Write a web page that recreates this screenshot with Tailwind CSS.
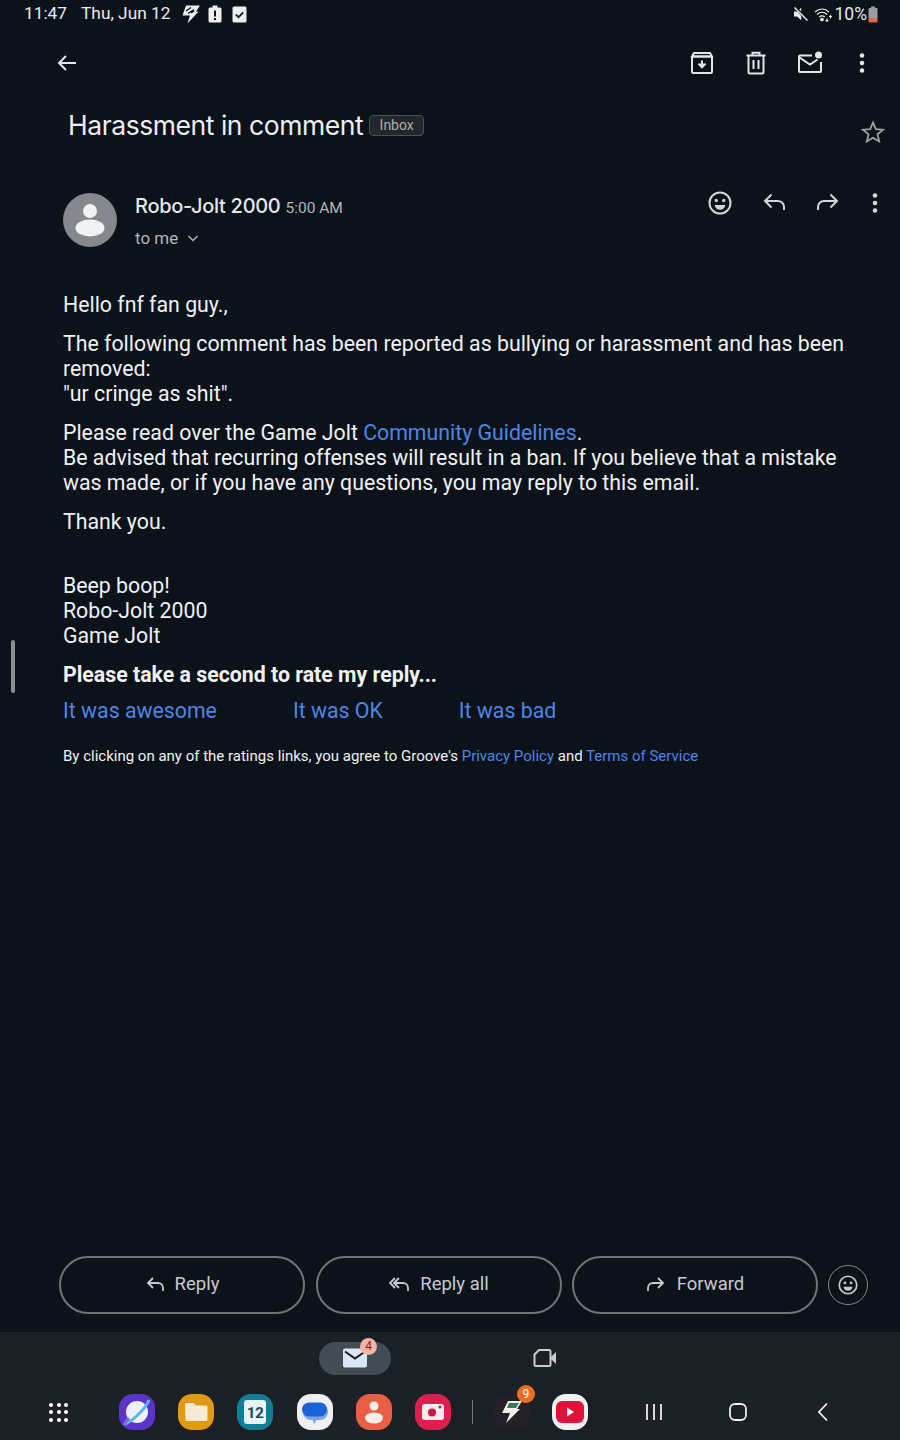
<!DOCTYPE html>
<html lang="en">
<head>
    <meta charset="UTF-8">
    <meta name="viewport" content="width=device-width, initial-scale=1.0">
    <title>Harassment in comment</title>
    <script src="https://cdn.jsdelivr.net/npm/@tailwindcss/browser@4"></script>
</head>
<body class="bg-[#0b121a] font-['Roboto',sans-serif] text-[#eceef0]">
<div class="relative w-[900px] h-[1440px] flex flex-col overflow-hidden">

    <!-- Scroll indicator -->
    <div class="absolute left-[11px] top-[640px] w-[4px] h-[53px] rounded-full bg-[#8b8f94]"></div>

    <!-- Status bar -->
    <div class="h-[28px] flex items-center justify-between pl-[24px] pr-[22px] text-[#e8eaec]">
        <div class="flex items-center">
            <span class="text-[17.300px]">11:47</span>
            <span class="text-[17.300px] ml-[14px]">Thu, Jun 12</span>
            <svg class="ml-[11px]" width="20" height="20" viewBox="0 0 20 20" fill="#eceef0"><path d="M5 1.500h14l-4 6h2.500L6.500 19.500l2.500-8H1.500z"/><path d="M5 7l5-3.500M7 9.500l6-4M10 9l3-2" stroke="#0b121a" stroke-width="1.300" fill="none"/></svg>
            <svg class="ml-[7px]" width="14" height="18" viewBox="0 0 14 18"><path fill="#eceef0" d="M4.500 0.500h5v2h2.500a1.500 1.500 0 0 1 1.500 1.500v12a1.500 1.500 0 0 1-1.500 1.500h-10a1.500 1.500 0 0 1-1.500-1.500v-12a1.500 1.500 0 0 1 1.500-1.500h2.500z"/><path fill="#0b121a" d="M6 5.500h2v6h-2zM6 13h2v2h-2z"/></svg>
            <svg class="ml-[10px]" width="15" height="17" viewBox="0 0 15 17"><rect x="0.500" y="0.500" width="14" height="16" rx="1.500" fill="#eceef0"/><path d="M3.800 8.500l2.700 2.700 4.800-4.800" stroke="#0b121a" stroke-width="1.700" fill="none"/></svg>
        </div>
        <div class="flex items-center">
            <svg width="16" height="16" viewBox="0 0 16 16" fill="#eceef0"><path d="M1 5.500h3.200l4-3.800v12.600l-4-3.800H1z"/><path d="M2 1l12.500 13.500" stroke="#0b121a" stroke-width="3"/><path d="M1.500 1.500l13 13" stroke="#eceef0" stroke-width="1.400"/></svg>
            <svg class="ml-[5px]" width="19" height="15" viewBox="0 0 19 15" fill="none" stroke="#eceef0" stroke-width="1.100"><path d="M1 5c4-4 10-4 14 0M3 7.500c3-2.800 7-2.800 10 0M5.200 10c1.800-1.500 3.800-1.500 5.600 0"/><circle cx="8" cy="12.500" r="1.300" fill="#eceef0"/><path d="M13 11.500v3M11.800 13l1.200 1.500 1.200-1.500M16.500 8v3.500M15 9.500h3"/></svg>
            <span class="text-[17.500px] ml-[2px]">10%</span>
            <svg class="ml-[1px]" width="10" height="17" viewBox="0 0 10 17"><path fill="#9a9da0" d="M3 0.500h4v1.500h1.500a1 1 0 0 1 1 1v9h-9v-9a1 1 0 0 1 1-1h1.500z"/><path fill="#e0654a" d="M0.500 12h9v3.500a1 1 0 0 1-1 1h-7a1 1 0 0 1-1-1z"/></svg>
        </div>
    </div>

    <!-- Toolbar -->
    <div class="h-[70px] flex items-center pl-[55px] pr-[26px]">
        <svg width="24" height="24" viewBox="0 0 24 24" fill="none" stroke="#e3e5e8" stroke-width="2"><path d="M21 12H4M11 5l-7 7 7 7"/></svg>
        <div class="ml-auto flex items-center gap-[30px]">
            <svg width="24" height="24" viewBox="0 0 24 24" fill="none" stroke="#e3e5e8" stroke-width="2"><rect x="2" y="5.500" width="20" height="16.500" rx="1.500"/><path d="M4 2h16l2 3.500H2z"/><path d="M12 9.500v7"/><path d="M8 13l4 4.300 4-4.300z" fill="#e3e5e8" stroke-width="1"/></svg>
            <svg width="24" height="24" viewBox="0 0 24 24" fill="none" stroke="#e3e5e8" stroke-width="2"><path d="M4.500 5.500V21a1.500 1.500 0 0 0 1.500 1.500h12a1.500 1.500 0 0 0 1.500-1.500V5.500M2.500 4.500h19M8.500 4V1.800h7V4M9.500 9v9M14.500 9v9"/></svg>
            <svg class="-ml-[1px]" width="26" height="24" viewBox="0 0 26 24" fill="none" stroke="#e3e5e8" stroke-width="2"><path d="M15 4.500H3a1 1 0 0 0-1 1V20a1 1 0 0 0 1 1h20a1 1 0 0 0 1-1v-9"/><path d="M2.500 6.500l10.500 7 7.500-5"/><circle cx="21.500" cy="4" r="3.500" fill="#e3e5e8" stroke="none"/></svg>
            <svg class="-ml-[3px]" width="24" height="24" viewBox="0 0 24 24" fill="#e3e5e8"><circle cx="12" cy="4.500" r="2.300"/><circle cx="12" cy="12" r="2.300"/><circle cx="12" cy="19.500" r="2.300"/></svg>
        </div>
    </div>

    <!-- Subject -->
    <div class="flex items-center pl-[68px] pr-[15px] h-[56px]">
        <h1 class="font-['Inter',sans-serif] text-[26.500px] tracking-[-0.45px] text-[#eceef0]">Harassment in comment</h1>
        <span class="ml-[6px] -mt-[2px] h-[21px] w-[55px] flex items-center justify-center rounded-[4px] border border-[#4a4f55] bg-[#22272d] text-[14px] text-[#a9adb1]">Inbox</span>
        <svg class="ml-auto mt-[12px]" width="24" height="24" viewBox="0 0 24 24" fill="none" stroke="#9ea2a6" stroke-width="1.800"><path d="M12 2.500l2.800 6.600 7.200.6-5.500 4.700 1.700 7-6.200-3.700-6.200 3.700 1.700-7L2 9.700l7.200-.6z"/></svg>
    </div>

    <!-- Sender -->
    <div class="flex pl-[63px] pr-[13px] mt-[12px]">
        <svg class="mt-[27px] shrink-0" width="54" height="54" viewBox="0 0 54 54"><circle cx="27" cy="27" r="27" fill="#85888c"/><circle cx="27" cy="18" r="7" fill="#f1f2f3"/><ellipse cx="27" cy="35" rx="14.500" ry="8.500" fill="#f1f2f3"/></svg>
        <div class="ml-[18px] mt-[25px]">
            <div class="flex items-baseline">
                <span class="font-['Inter',sans-serif] font-medium text-[20px] tracking-[-0.3px] text-[#e6e8ea]">Robo-Jolt 2000</span>
                <span class="ml-[5px] text-[15.500px] text-[#b4b7bb]">5:00 AM</span>
            </div>
            <div class="flex items-center mt-[5px] text-[17px] text-[#b4b7bb]">
                to me
                <svg class="ml-[8px] -mt-[2px]" width="14" height="14" viewBox="0 0 14 14" fill="none" stroke="#b4b7bb" stroke-width="1.400"><path d="M2.500 5l4.500 4.500L11.500 5"/></svg>
            </div>
        </div>
        <div class="ml-auto flex items-center gap-[30px] h-[28px] mt-[23px]">
            <svg width="24" height="24" viewBox="0 0 24 24" fill="none" stroke="#d3d6d9" stroke-width="2"><circle cx="12" cy="12" r="10.500"/><circle cx="8.300" cy="9.500" r="1.700" fill="#d3d6d9" stroke="none"/><circle cx="15.700" cy="9.500" r="1.700" fill="#d3d6d9" stroke="none"/><path d="M6.500 14h11c-.6 3-2.800 4.800-5.500 4.800S7.100 17 6.500 14z" fill="#d3d6d9" stroke="none"/></svg>
            <svg width="24" height="24" viewBox="0 0 24 24" fill="none" stroke="#d3d6d9" stroke-width="2"><path d="M22 19v-3a6 6 0 0 0-6-6H3M9.500 3.500L3 10l6.500 6.500"/></svg>
            <svg width="24" height="24" viewBox="0 0 24 24" fill="none" stroke="#d3d6d9" stroke-width="2"><path d="M2 19v-3a6 6 0 0 1 6-6h13M14.500 3.500L21 10l-6.500 6.500"/></svg>
            <svg class="-ml-[7px]" width="24" height="24" viewBox="0 0 24 24" fill="#d3d6d9"><circle cx="12" cy="4.500" r="2.300"/><circle cx="12" cy="12" r="2.300"/><circle cx="12" cy="19.500" r="2.300"/></svg>
        </div>
    </div>

    <!-- Message body -->
    <div class="pl-[63px] pr-[40px] mt-[40px] text-[21.300px] leading-[25px] text-[#f0f1f3]">
        <p>Hello fnf fan guy.,</p>
        <p class="mt-[14px]">The following comment has been reported as bullying or harassment and has been removed:<br>"ur cringe as shit".</p>
        <p class="mt-[14px]">Please read over the Game Jolt <a class="text-[#4d86e6]">Community Guidelines</a>.<br>Be advised that recurring offenses will result in a ban. If you believe that a mistake was made, or if you have any questions, you may reply to this email.</p>
        <p class="mt-[14px]">Thank you.</p>
        <p class="mt-[39px]">Beep boop!<br>Robo-Jolt 2000<br>Game Jolt</p>
        <p class="mt-[14px] font-bold">Please take a second to rate my reply...</p>
        <div class="flex mt-[11px] text-[#4d86e6]">
            <a>It was awesome</a>
            <a class="ml-[76px]">It was OK</a>
            <a class="ml-[76px]">It was bad</a>
        </div>
        <p class="mt-[23px] text-[15px] leading-[20px]">By clicking on any of the ratings links, you agree to Groove's <a class="text-[#4d86e6]">Privacy Policy</a> and <a class="text-[#4d86e6]">Terms of Service</a></p>
    </div>

    <!-- Reply actions -->
    <div class="mt-auto flex items-center gap-[10px] pl-[59px] h-[58px] mb-[18px] text-[18.500px] text-[#c6c9cd]">
        <button class="w-[246px] h-[58px] rounded-full border-2 border-[#6f7377] flex items-center justify-center gap-[10px]">
            <svg width="20" height="20" viewBox="0 0 20 20" fill="none" stroke="#c6c9cd" stroke-width="1.800"><path d="M18 16v-3a5 5 0 0 0-5-5H3M8 3L3 8l5 5"/></svg>
            Reply
        </button>
        <button class="ml-[1px] w-[246px] h-[58px] rounded-full border-2 border-[#6f7377] flex items-center justify-center gap-[11px]">
            <svg width="20" height="20" viewBox="0 0 20 20" fill="none" stroke="#c6c9cd" stroke-width="1.800"><path d="M19 16v-3a5 5 0 0 0-5-5H5M10 3L5 8l5 5M6 3L1 8l5 5"/></svg>
            Reply all
        </button>
        <button class="w-[246px] h-[58px] rounded-full border-2 border-[#6f7377] flex items-center justify-center gap-[11px]">
            <svg width="20" height="20" viewBox="0 0 20 20" fill="none" stroke="#c6c9cd" stroke-width="1.800"><path d="M2 16v-3a5 5 0 0 1 5-5h10M12 3l5 5-5 5"/></svg>
            Forward
        </button>
        <button class="w-[40px] h-[40px] rounded-full border border-[#84888d] flex items-center justify-center">
            <svg width="20" height="20" viewBox="0 0 24 24" fill="none" stroke="#c6c9cd" stroke-width="2"><circle cx="12" cy="12" r="10.500"/><circle cx="8.300" cy="9.500" r="1.700" fill="#c6c9cd" stroke="none"/><circle cx="15.700" cy="9.500" r="1.700" fill="#c6c9cd" stroke="none"/><path d="M6.500 14h11c-.6 3-2.800 4.800-5.500 4.800S7.100 17 6.500 14z" fill="#c6c9cd" stroke="none"/></svg>
        </button>
    </div>

    <!-- Taskbar -->
    <div class="h-[108px] bg-[#1b2026] flex flex-col">
        <div class="flex items-center h-[52px]">
            <div class="relative ml-[319px] w-[72px] h-[33px] rounded-full bg-[#414c55] flex items-center justify-center">
                <svg width="24" height="20" viewBox="0 0 24 20"><rect y="0.500" width="24" height="19" rx="2" fill="#d8e6f5"/><path d="M2 3.500l10 7 10-7" fill="none" stroke="#1b2026" stroke-width="2"/></svg>
                <span class="absolute left-[41px] -top-[4px] w-[17px] h-[17px] rounded-full bg-[#f3b4a9] text-[#8a1f1a] text-[12px] flex items-center justify-center">4</span>
            </div>
            <svg class="ml-[142px]" width="24" height="20" viewBox="0 0 24 20" fill="none" stroke="#c9ccd0" stroke-width="2"><path d="M6 2h10a1.500 1.500 0 0 1 1.500 1.500v13A1.500 1.500 0 0 1 16 18H3a1.500 1.500 0 0 1-1.500-1.500V6.500z"/><path d="M18 9l5-5v12l-5-5z" fill="#c9ccd0" stroke="none"/></svg>
        </div>
        <div class="flex items-center h-[56px]">
            <div class="ml-[49px] w-[19px] grid grid-cols-3 gap-[3.500px]">
                <i class="w-[4px] h-[4px] rounded-full bg-white"></i><i class="w-[4px] h-[4px] rounded-full bg-white"></i><i class="w-[4px] h-[4px] rounded-full bg-white"></i>
                <i class="w-[4px] h-[4px] rounded-full bg-white"></i><i class="w-[4px] h-[4px] rounded-full bg-white"></i><i class="w-[4px] h-[4px] rounded-full bg-white"></i>
                <i class="w-[4px] h-[4px] rounded-full bg-white"></i><i class="w-[4px] h-[4px] rounded-full bg-white"></i><i class="w-[4px] h-[4px] rounded-full bg-white"></i>
            </div>
            <div class="ml-[51px] flex items-center gap-[23.200px]">
                <svg width="36" height="36" viewBox="0 0 36 36"><rect width="36" height="36" rx="14" fill="#5b35c9"/><circle cx="18" cy="18" r="11" fill="#eef0f8"/><path d="M6 30C12 28 26 16 30 6" stroke="#58b8ea" stroke-width="3" fill="none"/><path d="M5 31c1-3 3-5 5-7" stroke="#7c6ee8" stroke-width="3" fill="none"/></svg>
                <svg width="36" height="36" viewBox="0 0 36 36"><rect width="36" height="36" rx="14" fill="#e29a12"/><path d="M7 10.500a1.500 1.500 0 0 1 1.500-1.500h7l2.500 2.500h10a1.500 1.500 0 0 1 1.500 1.500v12.500a1.500 1.500 0 0 1-1.500 1.500h-19a1.500 1.500 0 0 1-1.500-1.500z" fill="#f6ead2"/></svg>
                <div class="relative w-[36px] h-[36px] rounded-[14px] bg-[#0f7f99] flex items-center justify-center">
                    <span class="w-[22px] h-[24px] rounded-[3px] bg-[#e9f2f5] text-[#17485a] text-[15px] font-bold flex items-center justify-center pt-[2px]">12</span>
                </div>
                <svg width="36" height="36" viewBox="0 0 36 36"><rect width="36" height="36" rx="14" fill="#eef0f3"/><path d="M17 30l-2-6h6z" fill="#7da5ee"/><rect x="6" y="10" width="25" height="16" rx="8" fill="#7da5ee"/><rect x="5" y="8.500" width="25" height="14" rx="7" fill="#1a62d6"/></svg>
                <svg width="36" height="36" viewBox="0 0 36 36"><rect width="36" height="36" rx="14" fill="#e95f45"/><circle cx="18" cy="12" r="4.500" fill="#fbeee9"/><ellipse cx="18" cy="24" rx="9" ry="5.500" fill="#fbeee9"/></svg>
                <svg width="36" height="36" viewBox="0 0 36 36"><rect width="36" height="36" rx="14" fill="#db2050"/><rect x="7" y="10" width="22" height="16" rx="3" fill="#f9eaee"/><circle cx="17" cy="18.500" r="4" fill="#c01a45"/><circle cx="25" cy="13" r="1.500" fill="#c01a45"/></svg>
            </div>
            <div class="ml-[21px] w-[1px] h-[24px] bg-[#70757a]"></div>
            <div class="relative ml-[21px] w-[36px] h-[36px] rounded-[14px] bg-[#252028] flex items-center justify-center">
                <svg width="22" height="24" viewBox="0 0 22 24"><path d="M7 1h14l-5 8h3L5 23l4-10H1z" fill="#f0f2ee"/><path d="M8 3h10l-3 5H6z" fill="#2f7d5a"/></svg>
                <span class="absolute -right-[5px] -top-[9px] w-[18px] h-[18px] rounded-full bg-[#ee6c1f] text-white text-[12px] flex items-center justify-center">9</span>
            </div>
            <div class="ml-[22px] w-[36px] h-[36px] rounded-[14px] bg-[#f0f1f3] flex items-center justify-center">
                <svg width="28" height="22" viewBox="0 0 28 22"><rect width="28" height="22" rx="6" fill="#e0123a"/><path d="M11 6.500l7 4.500-7 4.500z" fill="#fff"/></svg>
            </div>
            <svg class="ml-[57px]" width="18" height="18" viewBox="0 0 18 18" stroke="#eceef0" stroke-width="1.800"><path d="M2 1v16M9 1v16M16 1v16"/></svg>
            <svg class="ml-[66px]" width="18" height="18" viewBox="0 0 18 18" fill="none" stroke="#eceef0" stroke-width="1.800"><rect x="1" y="1" width="16" height="16" rx="5"/></svg>
            <svg class="ml-[70px]" width="12" height="20" viewBox="0 0 12 20" fill="none" stroke="#eceef0" stroke-width="1.800"><path d="M10 1.500L2 10l8 8.500"/></svg>
        </div>
    </div>
</div>
</body>
</html>
